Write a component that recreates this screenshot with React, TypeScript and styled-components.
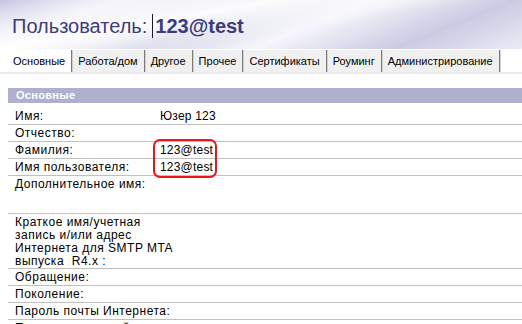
import React from 'react'
import styled, { createGlobalStyle } from 'styled-components'

const GlobalStyle = createGlobalStyle`
  html, body {
    margin: 0;
    padding: 0;
    background: #fff;
  }
  body {
    font-family: 'Liberation Sans', Arial, sans-serif;
    color: #000;
  }
`

const Page = styled.div`
  width: 522px;
  height: 324px;
  overflow: hidden;
  background: #fff;
`

const Banner = styled.div`
  height: 49px;
  display: flex;
  align-items: center;
  padding-left: 12px;
  box-sizing: border-box;
  background:
    linear-gradient(170deg, rgba(255, 255, 255, 0) 0%, rgba(255, 255, 255, 0.95) 35%, rgba(255, 255, 255, 0) 60%),
    linear-gradient(158deg, #c4c4e0 0%, #ececf7 18%, #cfcfe6 40%, #f6f6fb 58%, #cacae3 80%, #ebebf6 100%),
    #e4e4f2;
`

const Title = styled.h1`
  margin: 0;
  display: flex;
  align-items: center;
  font-size: 20px;
  font-weight: normal;
  color: #3c3c7c;
  padding-top: 3px;
`

const Cursor = styled.span`
  display: inline-block;
  width: 1px;
  height: 24px;
  background: #1a1a2a;
  margin: 0 2px 0 5px;
`

const TitleValue = styled.span`
  font-weight: bold;
  color: #3c3c7c;
`

const TabStrip = styled.div`
  display: flex;
  height: 22px;
  padding-left: 8px;
  margin-top: 1px;
  border-bottom: 2px solid #ececec;
`

const Tab = styled.div<{ $active?: boolean }>`
  padding: 0 6px 0 5px;
  line-height: 22px;
  font-size: 11px;
  background: ${({ $active }) => ($active ? '#fff' : '#f0f0f0')};
  border-right: 1px solid #7c7c7c;
  box-shadow: 1px 0 0 #d0d0d0;
  margin-right: 1px;
  white-space: nowrap;
`

const Section = styled.div`
  position: relative;
  margin: 14px 0 0 8px;
`

const SectionHeader = styled.div`
  height: 15px;
  line-height: 15px;
  background: #afafd0;
  color: #fff;
  font-size: 11px;
  font-weight: bold;
  letter-spacing: 0.3px;
  padding-left: 8px;
`

const Table = styled.div`
  padding-top: 5px;
`

const Row = styled.div<{ $minHeight?: number }>`
  display: flex;
  min-height: ${({ $minHeight }) => $minHeight ?? 16}px;
  border-bottom: 1px solid #c0c0c0;
  font-size: 12px;
  letter-spacing: 0.5px;
  line-height: 13px;
`

const Label = styled.div`
  flex: 0 0 152px;
  box-sizing: border-box;
  padding: 2px 7px 0;
  white-space: nowrap;
`

const Value = styled.div`
  flex: 1;
  padding-top: 2px;
  letter-spacing: 0.2px;
`

const Highlight = styled.div`
  position: absolute;
  left: 145px;
  top: 51px;
  width: 64px;
  height: 39px;
  box-sizing: border-box;
  border: 2px solid #e8161b;
  border-radius: 7px;
`

const tabs = ['Основные', 'Работа/дом', 'Другое', 'Прочее', 'Сертификаты', 'Роуминг', 'Администрирование']

type Field = { label: React.ReactNode; value?: string; minHeight?: number }

const fields: Field[] = [
  { label: 'Имя:', value: 'Юзер 123' },
  { label: 'Отчество:' },
  { label: 'Фамилия:', value: '123@test' },
  { label: 'Имя пользователя:', value: '123@test' },
  { label: 'Дополнительное имя:', minHeight: 37 },
  {
    label: (
      <>
        Краткое имя/учетная
        <br />
        запись и/или адрес
        <br />
        Интернета для SMTP MTA
        <br />
        выпуска&nbsp; R4.x :
      </>
    ),
  },
  { label: 'Обращение:' },
  { label: 'Поколение:' },
  { label: 'Пароль почты Интернета:' },
  { label: 'Предпочтительный язык:' },
]

export default function App() {
  return (
    <Page>
      <GlobalStyle />
      <Banner>
        <Title>
          Пользователь:
          <Cursor />
          <TitleValue>123@test</TitleValue>
        </Title>
      </Banner>
      <TabStrip>
        {tabs.map((t, i) => (
          <Tab key={t} $active={i === 0}>
            {t}
          </Tab>
        ))}
      </TabStrip>
      <Section>
        <SectionHeader>Основные</SectionHeader>
        <Table>
          {fields.map((f, i) => (
            <Row key={i} $minHeight={f.minHeight}>
              <Label>{f.label}</Label>
              <Value>{f.value}</Value>
            </Row>
          ))}
        </Table>
        <Highlight />
      </Section>
    </Page>
  )
}
